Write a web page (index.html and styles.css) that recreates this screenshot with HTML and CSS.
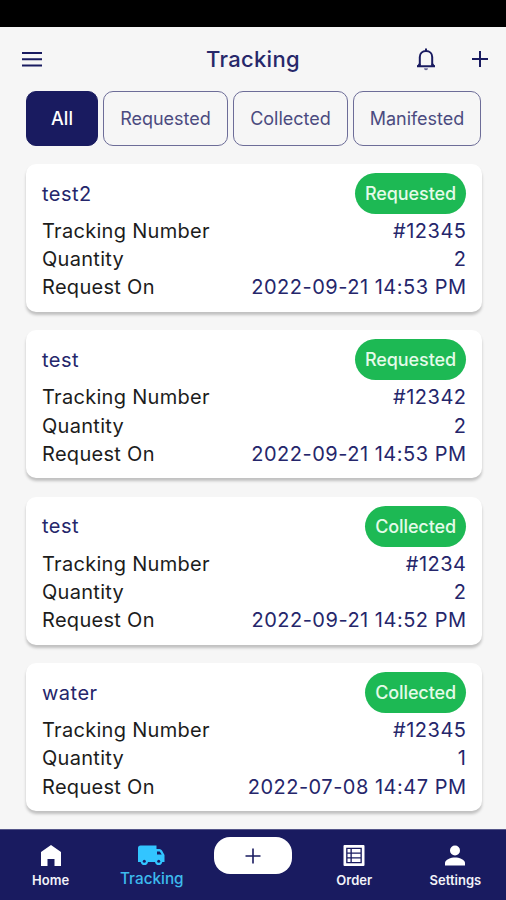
FILE: index.html
```html
<!DOCTYPE html>
<html lang="en">
<head>
    <meta charset="UTF-8">
    <meta name="viewport" content="width=device-width, initial-scale=1.0">
    <title>Tracking</title>
    <link rel="stylesheet" href="styles.css">
</head>
<body>
<div class="app">
    <div class="status-bar"></div>
    <header class="header">
        <svg class="menu-icon" width="22" height="16" viewBox="0 0 22 16">
            <path d="M1 2h20M1 8.300h20M1 14.500h20"/>
        </svg>
        <h1>Tracking</h1>
        <div class="header-actions">
            <svg width="20" height="24" viewBox="0 0 20 24">
                <path d="M1 19.300h18M3.800 19V10C3.800 6.400 6.400 4 10 4s6.200 2.400 6.200 6v9M10 4V1.600"/>
                <path d="M2 19.300l2-2.600M18 19.300l-2-2.600"/>
                <path class="clapper" d="M8 21.300h4a2 2 0 0 1-4 0z"/>
            </svg>
            <svg width="18" height="18" viewBox="0 0 18 18">
                <path d="M9 1v16M1 9h16"/>
            </svg>
        </div>
    </header>

    <div class="tabs">
        <button class="tab tab-all active">All</button>
        <button class="tab tab-requested">Requested</button>
        <button class="tab tab-collected">Collected</button>
        <button class="tab tab-manifested">Manifested</button>
    </div>

    <main class="orders">
        <div class="card">
            <div class="card-top"><h2>test2</h2><span class="badge">Requested</span></div>
            <div class="row"><span>Tracking Number</span><span class="value">#12345</span></div>
            <div class="row"><span>Quantity</span><span class="value">2</span></div>
            <div class="row"><span>Request On</span><span class="value">2022-09-21 14:53 PM</span></div>
        </div>
        <div class="card">
            <div class="card-top"><h2>test</h2><span class="badge">Requested</span></div>
            <div class="row"><span>Tracking Number</span><span class="value">#12342</span></div>
            <div class="row"><span>Quantity</span><span class="value">2</span></div>
            <div class="row"><span>Request On</span><span class="value">2022-09-21 14:53 PM</span></div>
        </div>
        <div class="card">
            <div class="card-top"><h2>test</h2><span class="badge">Collected</span></div>
            <div class="row"><span>Tracking Number</span><span class="value">#1234</span></div>
            <div class="row"><span>Quantity</span><span class="value">2</span></div>
            <div class="row"><span>Request On</span><span class="value">2022-09-21 14:52 PM</span></div>
        </div>
        <div class="card">
            <div class="card-top"><h2>water</h2><span class="badge">Collected</span></div>
            <div class="row"><span>Tracking Number</span><span class="value">#12345</span></div>
            <div class="row"><span>Quantity</span><span class="value">1</span></div>
            <div class="row"><span>Request On</span><span class="value">2022-07-08 14:47 PM</span></div>
        </div>
    </main>

    <nav class="bottom-nav">
        <a class="nav-item">
            <svg width="20" height="21" viewBox="0 0 20 21">
                <path d="M10 0l10 7v14h-6.500v-7h-7v7H0V7z"/>
            </svg>
            <span>Home</span>
        </a>
        <a class="nav-item current">
            <svg width="27" height="20" viewBox="0 0 27 20">
                <path fill-rule="evenodd" d="M2.500 0H18.500V3.500H21.500Q23 3.500 24 5L26.500 9.500V16.500H24.300A3.700 3.700 0 0 1 17 16.500H10A3.700 3.700 0 0 1 2.700 16.500H0V2.500A2.500 2.500 0 0 1 2.500 0zM19 6V9H23.700L21.700 6z"/>
                <circle class="wheel" cx="6.300" cy="15.800" r="1.500"/>
                <circle class="wheel" cx="20.700" cy="15.800" r="1.500"/>
            </svg>
            <span>Tracking</span>
        </a>
        <a class="nav-item">
            <span class="add-btn">
                <svg width="16" height="16" viewBox="0 0 16 16">
                    <path d="M8 .5v15M.5 8h15"/>
                </svg>
            </span>
        </a>
        <a class="nav-item">
            <svg width="22" height="22" viewBox="0 0 22 22">
                <rect width="22" height="22" rx="1"/>
                <path class="grid-lines" d="M3.500 3.500h15v15h-15zM8 3.500v15M3.500 8.500h15M3.500 13.500h15"/>
            </svg>
            <span>Order</span>
        </a>
        <a class="nav-item">
            <svg width="20" height="20" viewBox="0 0 20 20">
                <circle cx="10" cy="5" r="5"/>
                <path d="M0 20v-2.500C0 14 6 12 10 12s10 2 10 5.500V20z"/>
            </svg>
            <span>Settings</span>
        </a>
    </nav>
</div>
</body>
</html>
```
FILE: styles.css
```css
/* General Styles */
* {
    box-sizing: border-box;
}

body {
    font-family: 'Inter', sans-serif;
    margin: 0;
    background: #f6f6f6;
    color: #1c1c1c;
}

.app {
    display: flex;
    flex-direction: column;
    height: 900px;
    overflow: hidden;
}

.status-bar {
    height: 27px;
    flex-shrink: 0;
    background: #000;
}

/* Header */
.header {
    display: grid;
    grid-template-columns: 1fr auto 1fr;
    align-items: center;
    height: 64px;
    flex-shrink: 0;
    padding: 0 17px 0 21px;
}

.header svg {
    fill: none;
    stroke: #191b60;
    stroke-width: 2;
}

.header .clapper {
    fill: #6b6c98;
    stroke: none;
}

.header h1 {
    margin: 0 4px 0 0;
    font-size: 22px;
    font-weight: 450;
    letter-spacing: 0.3px;
    color: #27286a;
}

.header-actions {
    display: flex;
    align-items: center;
    justify-content: flex-end;
    gap: 35px;
}

/* Filter tabs */
.tabs {
    display: flex;
    gap: 5px;
    height: 55px;
    flex-shrink: 0;
    padding: 0 25px 0 26px;
}

.tab {
    padding: 0 0 1px;
    border: 1px solid #6d6d98;
    border-radius: 10px;
    background: transparent;
    font-family: inherit;
    font-size: 18px;
    letter-spacing: 0;
    color: #4b4b80;
}

.tab.active {
    background: #191b60;
    border-color: #191b60;
    font-weight: 500;
    color: #fff;
}

.tab-all {
    width: 72px;
}

.tab-requested {
    width: 125px;
}

.tab-collected {
    width: 115px;
}

.tab-manifested {
    width: 128px;
}

/* Order cards */
.orders {
    display: flex;
    flex-direction: column;
    gap: 18.4px;
    flex: 1;
    padding: 18px 24px 0 26px;
}

.card {
    height: 148px;
    flex-shrink: 0;
    padding: 9px 16px 0;
    background: #fff;
    border-radius: 10px;
    box-shadow: 0 3px 3px rgba(0, 0, 0, 0.22);
}

.card-top {
    display: flex;
    align-items: center;
    justify-content: space-between;
    height: 41px;
    margin-bottom: 3px;
}

.card-top h2 {
    margin: 0;
    font-size: 20px;
    font-weight: 400;
    letter-spacing: 0.5px;
    color: #25266b;
}

.badge {
    padding: 0 10px;
    border-radius: 21px;
    background: #1db954;
    font-size: 18px;
    font-weight: 500;
    line-height: 41px;
    letter-spacing: -0.1px;
    color: #e4fbe9;
}

.row {
    display: flex;
    justify-content: space-between;
    font-size: 20px;
    line-height: 28.2px;
    letter-spacing: 0.3px;
}

.value {
    margin-right: -0.5px;
    letter-spacing: 0.5px;
    color: #25266b;
}

/* Bottom navigation */
.bottom-nav {
    display: grid;
    grid-template-columns: repeat(5, 1fr);
    height: 71px;
    flex-shrink: 0;
    border-top: 1px solid #55568a;
    background: #191b60;
    color: #f2f2f8;
}

.nav-item {
    display: flex;
    flex-direction: column;
    align-items: center;
    padding-top: 15px;
    font-size: 13px;
    font-weight: 600;
}

.nav-item > svg {
    height: 21px;
    fill: #fff;
}

.nav-item > span {
    margin-top: 6px;
}

.nav-item.current {
    font-size: 15.3px;
    font-weight: 500;
    color: #3dbbee;
}

.nav-item.current > svg {
    fill: #32c5ff;
}

.nav-item .wheel {
    fill: #191b60;
}

.nav-item.current > span {
    margin-top: 3px;
}

.nav-item .grid-lines {
    fill: none;
    stroke: #191b60;
    stroke-width: 1.4;
}

.nav-item .add-btn {
    display: flex;
    align-items: center;
    justify-content: center;
    width: 78px;
    height: 37px;
    margin-top: -8px;
    border-radius: 16px;
    background: #fff;
}

.add-btn svg {
    stroke: #191b60;
    stroke-width: 1.6;
}
```
